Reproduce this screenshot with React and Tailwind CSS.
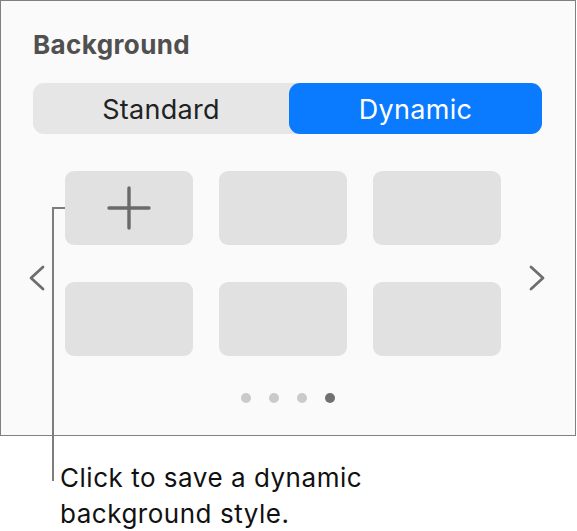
const font = { fontFamily: 'Inter, "Noto Sans", sans-serif' };

function Tile({ children }) {
  return (
    <div className="w-[128px] h-[74px] rounded-[9px] bg-[#e1e1e1] flex items-center justify-center">
      {children}
    </div>
  );
}

function Chevron({ dir }) {
  const d = dir === 'left' ? 'M15 2 L3 13 L15 24' : 'M3 2 L15 13 L3 24';
  return (
    <svg width="18" height="26" viewBox="0 0 18 26" className="mt-[94px] shrink-0">
      <path d={d} fill="none" stroke="#6e6e6e" strokeWidth="2.8" strokeLinecap="round" strokeLinejoin="round" />
    </svg>
  );
}

export default function App() {
  const dots = [false, false, false, true];

  return (
    <div className="relative w-[577px] h-[531px] bg-white overflow-hidden" style={font}>
      <div className="w-[576px] h-[436px] border border-[#808080] bg-[#fafafa] pt-[28px] pl-[32px] pr-[33px]">
        <h2 className="text-[26px] leading-[32px] font-bold text-[#505050] tracking-[0.015em]">Background</h2>

        <div className="mt-[22px] h-[51px] w-[509px] rounded-[11px] bg-[#e6e6e6] flex">
          <button className="flex-1 pt-[3px] text-[27px] text-[#222] flex items-center justify-center tracking-[0.01em]">
            Standard
          </button>
          <button className="w-[253px] pt-[3px] rounded-[11px] bg-[#0a7aff] text-[27px] text-white flex items-center justify-center tracking-[0.01em]">
            Dynamic
          </button>
        </div>

        <div className="mt-[37px] flex items-start -ml-[5px]">
          <Chevron dir="left" />
          <div className="ml-[19px] grid grid-cols-[128px_128px_128px] gap-x-[26px] gap-y-[37px]">
            <Tile>
              <svg width="44" height="44" viewBox="0 0 44 44">
                <path d="M22 2v40M2 22h40" stroke="#6a6a6a" strokeWidth="3.4" strokeLinecap="round" />
              </svg>
            </Tile>
            <Tile />
            <Tile />
            <Tile />
            <Tile />
            <Tile />
          </div>
          <div className="ml-[27px]">
            <Chevron dir="right" />
          </div>
        </div>

        <div className="mt-[37px] flex justify-center gap-[18px]">
          {dots.map((on, i) => (
            <span key={i} className={`w-[10px] h-[10px] rounded-full ${on ? 'bg-[#707070]' : 'bg-[#cacaca]'}`} />
          ))}
        </div>
      </div>

      {/* callout */}
      <div className="absolute left-[52px] top-[207px] w-[13px] h-[2px] bg-[#7d7d7d]" />
      <div className="absolute left-[52px] top-[207px] w-[2px] h-[274px] bg-[#7d7d7d]" />

      <p className="mt-[24px] pl-[60px] text-[26px] leading-[36px] text-[#111] tracking-[0.02em]">
        Click to save a dynamic
        <br />
        background style.
      </p>
    </div>
  );
}
